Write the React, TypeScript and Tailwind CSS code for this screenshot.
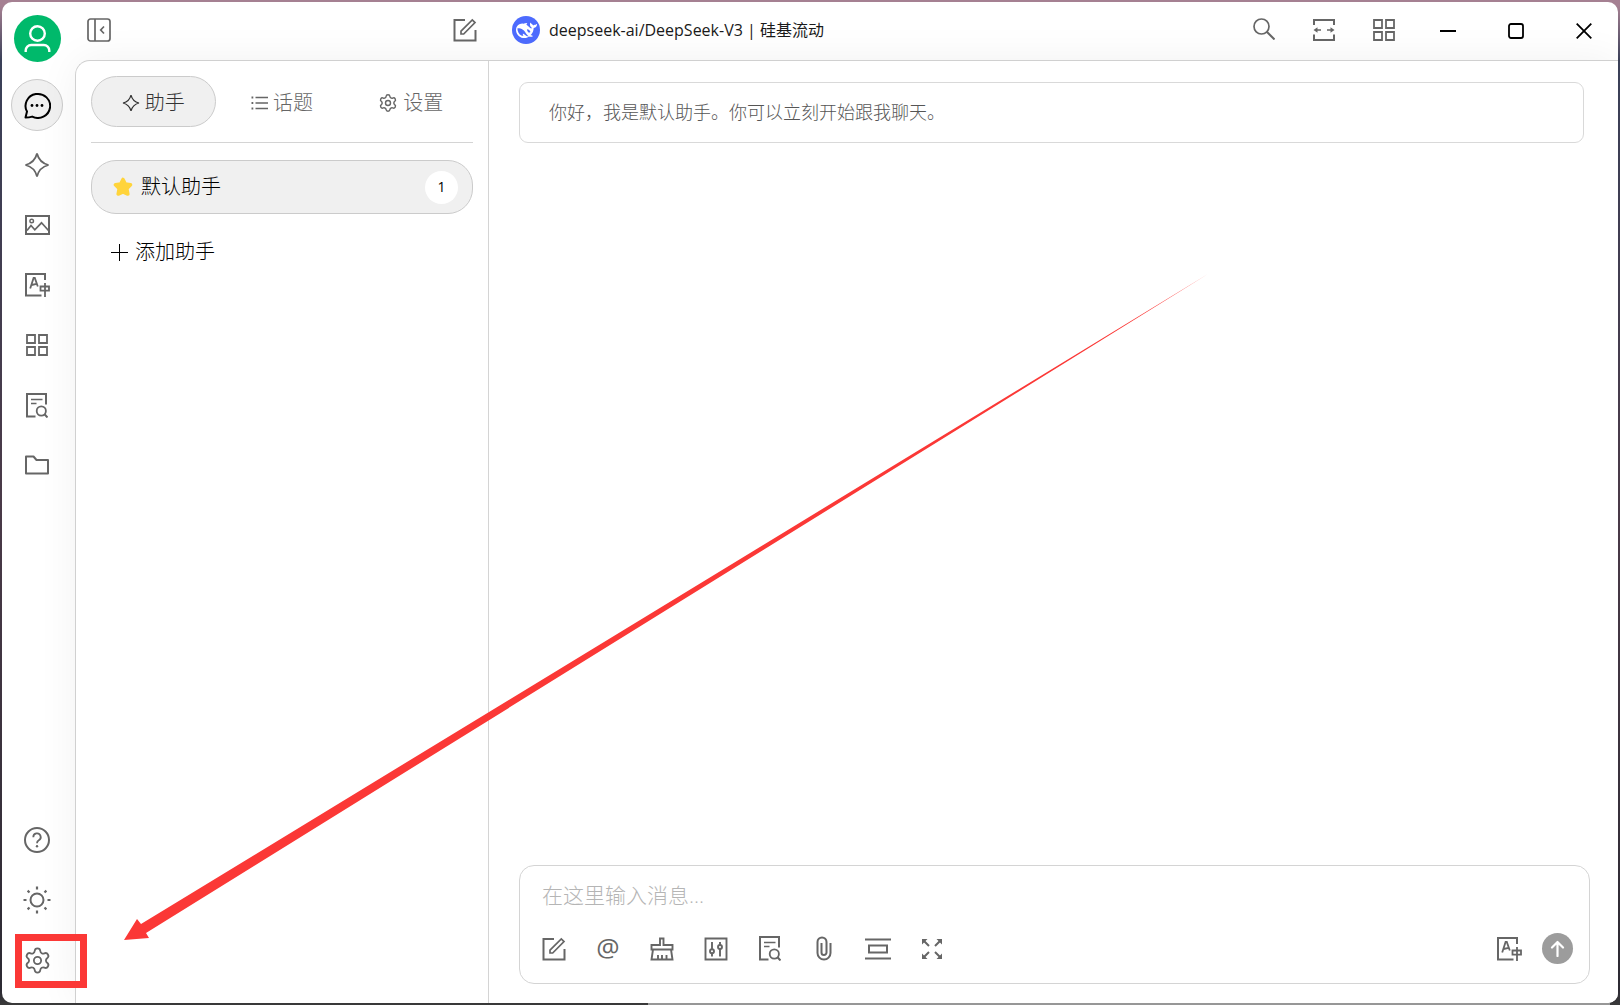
import { ReactNode, useState } from "react";
import { Settings } from "lucide-react";

interface GlyphProps {
  w: number;
  h: number;
  children: ReactNode;
  stroke?: number;
}

function Glyph({ w, h, children, stroke = 2 }: GlyphProps) {
  return (
    <svg
      width={w}
      height={h}
      viewBox={`0 0 ${w} ${h}`}
      fill="none"
      stroke="currentColor"
      strokeWidth={stroke}
      className="shrink-0"
      aria-hidden="true"
    >
      {children}
    </svg>
  );
}

const SparkleIcon = ({ size = 26 }: { size?: number }) => (
  <svg width={size} height={size} viewBox="0 0 26 26" fill="none" stroke="currentColor" strokeWidth="1.8" className="shrink-0" aria-hidden="true">
    <path d="M13 1.500C14.500 7.500 18.500 11.500 24.500 13 18.500 14.500 14.500 18.500 13 24.500 11.500 18.500 7.500 14.500 1.500 13 7.500 11.500 11.500 7.500 13 1.500Z" />
  </svg>
);

const ChatIcon = () => (
  <Glyph w={28} h={27}>
    <path d="M2.500 25.600 4 19.600A12.300 12 0 1 1 9.200 24.600Q6 25.600 2.500 25.600Z" strokeLinejoin="round" />
    <g fill="currentColor" stroke="none">
      <circle cx="9" cy="13.500" r="1.400" />
      <circle cx="14" cy="13.500" r="1.400" />
      <circle cx="19" cy="13.500" r="1.400" />
    </g>
  </Glyph>
);

const ImageIcon = () => (
  <Glyph w={25} h={20}>
    <path d="M1 1H24V19H1Z" />
    <circle cx="6.700" cy="6" r="1.800" strokeWidth="1.400" />
    <path d="M2 15.500 6 10.500 9.800 14.800 16.500 7.800 23.500 15.500" strokeWidth="1.700" />
  </Glyph>
);

const TranslateIcon = () => (
  <Glyph w={25} h={24}>
    <path d="M20 7V1H1V22.500H16.500" />
    <path d="M5.200 15.500 8.600 5H9.800L12.800 13.500M6.500 12 11.800 10.800" strokeWidth="1.800" />
    <path d="M15.500 13.500H24V17.700H15.500ZM20 10V24" strokeWidth="1.800" />
  </Glyph>
);

const GridIcon = () => (
  <Glyph w={24} h={24} stroke={1.800}>
    <path d="M2 2H10V10H2ZM14 2H22V10H14ZM2 14H10V22H2ZM14 14H22V22H14Z" />
  </Glyph>
);

const DocSearchIcon = () => (
  <Glyph w={22} h={25}>
    <path d="M20 11.500V1H1V23.500H9.500" />
    <path d="M5 6.500H16.500M5 10.500H10.500" strokeWidth="1.500" />
    <circle cx="15.300" cy="18" r="4.600" strokeWidth="1.800" />
    <path d="M18.500 21.300 21.500 24.500" />
  </Glyph>
);

const FolderIcon = () => (
  <Glyph w={24} h={20}>
    <path d="M1 1.500H8.500L11.500 5H23V18.500H1Z" strokeLinejoin="round" />
  </Glyph>
);

const HelpIcon = () => (
  <Glyph w={26} h={26}>
    <circle cx="13" cy="13" r="12" />
    <path d="M9.300 10.200A3.700 3.700 0 1 1 14.800 13.300Q13 14.300 13 16.300" strokeWidth="1.800" />
    <circle cx="13" cy="19.300" r="1.200" fill="currentColor" stroke="none" />
  </Glyph>
);

const SunIcon = () => (
  <Glyph w={28} h={28}>
    <circle cx="14" cy="14" r="6.500" />
    <path d="M14 .5V3.500M14 24.500V27.500M.5 14H3.500M24.500 14H27.500M4.600 4.600 6.500 6.500M21.500 21.500 23.400 23.400M4.600 23.400 6.500 21.500M21.500 6.500 23.400 4.600" strokeWidth="2.200" />
  </Glyph>
);

const EditIcon = () => (
  <Glyph w={24} h={24}>
    <path d="M12 2H1.500V22.500H22.500V12" />
    <path d="M8 16V13.200L19.300 2 22 4.600 10.700 16Z" strokeWidth="1.700" />
  </Glyph>
);

const CollapseIcon = () => (
  <Glyph w={24} h={24} stroke={1.700}>
    <rect x="1" y="1" width="22" height="22" rx="2.500" />
    <path d="M8 1V23M17 8.500 13.700 12 17 15.500" />
  </Glyph>
);

const BroomIcon = () => (
  <Glyph w={24} h={24} stroke={1.900}>
    <path d="M10 8V1.500H13.500V8H22.500V12.500H1.500V8ZM3 12.500 1.500 22.500H22.500L21 12.500M8 22.500V18M12 22.500V18M16.500 22.500V18" />
  </Glyph>
);

const SlidersIcon = () => (
  <Glyph w={24} h={24} stroke={1.900}>
    <path d="M1.500 1.500H22.500V22.500H1.500ZM8 5V12.300M8 16.500V19.500M16 5V8M16 12V19.500" />
    <circle cx="8" cy="14.300" r="2" />
    <circle cx="16" cy="10" r="2" />
  </Glyph>
);

const ClipIcon = () => (
  <Glyph w={16} h={25}>
    <path d="M14.500 7V17A6.500 6.500 0 0 1 1.500 17V6A4.500 4.500 0 0 1 10.500 6V16.500A2.500 2.500 0 0 1 5.500 16.500V7" />
  </Glyph>
);

const ContextIcon = () => (
  <Glyph w={26} h={22}>
    <path d="M0 1.500H26M0 20.500H26M4 7.500H22V14.500H4Z" />
  </Glyph>
);

const ExpandIcon = () => (
  <Glyph w={22} h={22}>
    <path d="M2 2 8 8M20 2 14 8M2 20 8 14M20 20 14 14" />
    <path d="M1 1H6.500L1 6.500ZM21 1H15.500L21 6.500ZM1 21V15.500L6.500 21ZM21 21H15.500L21 15.500Z" fill="currentColor" stroke="none" />
  </Glyph>
);

const SearchIcon = () => (
  <Glyph w={22} h={22} stroke={1.700}>
    <circle cx="8.500" cy="8.500" r="7.500" />
    <path d="M13.800 13.800 21.500 21.500" strokeWidth="2" />
  </Glyph>
);

const WidthIcon = () => (
  <Glyph w={24} h={24}>
    <path d="M2 7V2H22V7M2 16.500V22H22V16.500" />
    <path d="M3.500 12H9M15 12H20.500" strokeWidth="1.700" />
    <path d="M1.500 12 5.500 9.300V14.700ZM22.500 12 18.500 9.300V14.700Z" fill="currentColor" stroke="none" />
  </Glyph>
);

const ListIcon = () => (
  <Glyph w={17} h={16} stroke={1.300}>
    <path d="M4.500 2.500H17M4.500 8H17M4.500 13.500H17" />
    <path d="M.5 2.500H2.300M.5 8H2.300M.5 13.500H2.300" strokeWidth="1.800" />
  </Glyph>
);

const StarIcon = () => (
  <svg width="20" height="20" viewBox="0 0 20 20" fill="#ffd43b" stroke="#ffd43b" strokeWidth="3.600" strokeLinejoin="round" className="shrink-0" aria-hidden="true">
    <path d="M10 2.500 12.300 7 17.500 7.800 13.800 11.600 14.800 17 10 14.800 5.200 17 6.200 11.600 2.500 7.800 7.700 7Z" />
  </svg>
);

function ModelLogo() {
  return (
    <span className="flex size-7 shrink-0 items-center justify-center rounded-full bg-[#4d6bfe] text-white">
      <svg width="21" height="21" viewBox="0 0 24 24" fill="currentColor" aria-hidden="true">
        <path
          fillRule="evenodd"
          d="M23.748 4.482c-.254-.124-.364.113-.512.234-.051.039-.094.09-.137.136-.372.397-.806.657-1.373.626-.829-.046-1.537.214-2.163.848-.133-.782-.575-1.248-1.247-1.548-.352-.156-.708-.311-.955-.65-.172-.241-.219-.51-.305-.774-.055-.16-.11-.323-.293-.35-.2-.031-.278.136-.356.276-.313.572-.434 1.202-.422 1.84.027 1.436.633 2.58 1.838 3.393.137.093.172.187.129.323-.082.28-.18.552-.266.833-.055.179-.137.217-.329.14a5.526 5.526 0 01-1.736-1.18c-.857-.828-1.631-1.742-2.597-2.458a11.365 11.365 0 00-.689-.471c-.985-.957.13-1.743.388-1.836.27-.098.093-.432-.779-.428-.872.004-1.67.295-2.687.684a3.055 3.055 0 01-.465.137 9.597 9.597 0 00-2.883-.102c-1.885.21-3.39 1.102-4.497 2.623C.082 8.606-.231 10.684.152 12.85c.403 2.284 1.569 4.175 3.36 5.653 1.858 1.533 3.997 2.284 6.438 2.14 1.482-.085 3.133-.284 4.994-1.86.47.234.962.327 1.78.397.63.059 1.236-.03 1.705-.128.735-.156.684-.837.419-.961-2.155-1.004-1.682-.595-2.113-.926 1.096-1.296 2.746-2.642 3.392-7.003.05-.347.007-.565 0-.845-.004-.17.035-.237.23-.256a4.173 4.173 0 001.545-.475c1.396-.763 1.96-2.015 2.093-3.517.02-.23-.004-.467-.247-.588zM11.581 18c-2.089-1.642-3.102-2.183-3.52-2.16-.392.024-.321.471-.235.763.09.288.207.486.371.739.114.167.192.416-.113.603-.673.416-1.842-.14-1.897-.167-1.361-.802-2.5-1.86-3.301-3.307-.774-1.393-1.224-2.887-1.298-4.482-.02-.386.093-.522.477-.592a4.696 4.696 0 011.529-.039c2.132.312 3.946 1.265 5.468 2.774.868.86 1.525 1.887 2.202 2.891.72 1.066 1.494 2.082 2.48 2.914.348.292.625.514.891.677-.802.09-2.14.11-3.054-.614zM12.600 11.300c.3-.6.900-.7 1.400-.5 1 .4 1.700 1.200 2.200 2.100.3.600.1 1.100-.5 1.300-.8.300-1.500 0-2-.6-.5-.7-.8-1.500-1.100-2.300z"
        />
      </svg>
    </span>
  );
}

const navItems = [
  { label: "聊天", icon: <ChatIcon />, active: true },
  { label: "智能体", icon: <SparkleIcon /> },
  { label: "绘画", icon: <ImageIcon /> },
  { label: "翻译", icon: <TranslateIcon /> },
  { label: "小程序", icon: <GridIcon /> },
  { label: "知识库", icon: <DocSearchIcon /> },
  { label: "文件", icon: <FolderIcon /> },
];

const tabs = [
  { label: "助手", icon: <SparkleIcon size={18} /> },
  { label: "话题", icon: <ListIcon /> },
  { label: "设置", icon: <Settings size={20} strokeWidth={1.7} /> },
];

const tools = [
  { label: "新话题", icon: <EditIcon /> },
  { label: "提及模型", icon: <span className="pb-1 text-[26px] leading-6 font-normal">@</span> },
  { label: "清空消息", icon: <BroomIcon /> },
  { label: "参数", icon: <SlidersIcon /> },
  { label: "选择知识库", icon: <DocSearchIcon /> },
  { label: "上传附件", icon: <ClipIcon /> },
  { label: "清除上下文", icon: <ContextIcon /> },
  { label: "展开", icon: <ExpandIcon /> },
];

function NavButton({ label, icon, active }: { label: string; icon: ReactNode; active?: boolean }) {
  return (
    <button
      type="button"
      aria-label={label}
      className={`flex size-[52px] items-center justify-center rounded-full ${
        active ? "border border-[#cbcbcb] bg-[#f0f0f0] text-black" : "text-[#666]"
      }`}
    >
      {icon}
    </button>
  );
}

function Sidebar() {
  return (
    <nav className="flex w-[73px] shrink-0 flex-col items-center pt-[13px] pr-[3px] pb-[17px]">
      <button type="button" aria-label="用户" className="mb-[17px] flex size-[47px] items-center justify-center rounded-full bg-[#00b96b] text-white">
        <Glyph w={27} h={29} stroke={2.4}>
          <circle cx="13.500" cy="9.500" r="7.300" />
          <path d="M1.700 28V26.500A5.500 5.500 0 0 1 7.200 21H19.800A5.500 5.500 0 0 1 25.300 26.500V28" />
        </Glyph>
      </button>
      <div className="flex flex-1 flex-col gap-2">
        {navItems.map((item) => (
          <NavButton key={item.label} {...item} />
        ))}
      </div>
      <div className="flex flex-col gap-2">
        <NavButton label="帮助" icon={<HelpIcon />} />
        <NavButton label="主题" icon={<SunIcon />} />
        <div className="relative">
          <NavButton label="设置" icon={<Settings size={29} strokeWidth={1.5} />} />
          <div className="pointer-events-none absolute top-0 left-1 z-20 h-[54px] w-[72px] border-[7px] border-[#fb3836]" />
        </div>
      </div>
    </nav>
  );
}

function Header() {
  return (
    <header className="flex h-[58px] shrink-0 items-center text-[#666]">
      <div className="flex w-[414px] shrink-0 items-center justify-between pr-3 pb-[2px] pl-3">
        <button type="button" aria-label="收起侧栏">
          <CollapseIcon />
        </button>
        <button type="button" aria-label="新建话题">
          <EditIcon />
        </button>
      </div>
      <button type="button" className="ml-[23px] flex items-center gap-[9px] pb-[2px] text-base font-normal text-[#1a1a1a]">
        <ModelLogo />
        <span>deepseek-ai/DeepSeek-V3 | 硅基流动</span>
      </button>
      <div className="ml-auto flex pb-[2px]">
        <button type="button" aria-label="搜索" className="flex w-[60px] justify-center">
          <SearchIcon />
        </button>
        <button type="button" aria-label="宽度" className="flex w-[60px] justify-center">
          <WidthIcon />
        </button>
        <button type="button" aria-label="小程序" className="flex w-[60px] justify-center">
          <GridIcon />
        </button>
      </div>
      <div className="flex text-black">
        <button type="button" aria-label="最小化" className="flex w-[68px] justify-center">
          <Glyph w={16} h={16}>
            <path d="M0 8H16" />
          </Glyph>
        </button>
        <button type="button" aria-label="最大化" className="flex w-[68px] justify-center">
          <Glyph w={16} h={16} stroke={1.800}>
            <rect x="1" y="1" width="14" height="14" rx="2" />
          </Glyph>
        </button>
        <button type="button" aria-label="关闭" className="flex w-[68px] justify-center">
          <Glyph w={16} h={16} stroke={1.800}>
            <path d="M.7.7 15.300 15.300M15.300.7.7 15.300" />
          </Glyph>
        </button>
      </div>
    </header>
  );
}

function AssistantPanel() {
  const [activeTab, setActiveTab] = useState("助手");

  return (
    <aside className="flex w-[413px] shrink-0 flex-col border-r border-[#d4d4d4] px-[15px] pt-[15px]">
      <div className="flex gap-1 border-b border-[#d4d4d4] pb-[15px]">
        {tabs.map((tab) => (
          <button
            key={tab.label}
            type="button"
            onClick={() => setActiveTab(tab.label)}
            className={`flex h-[51px] flex-1 items-center justify-center gap-[5px] rounded-full border pt-[3px] text-[20px] ${
              activeTab === tab.label
                ? "border-[#cbcbcb] bg-[#f0f0f0] text-[#333]"
                : "border-transparent text-[#666]"
            }`}
          >
            {tab.icon}
            {tab.label}
          </button>
        ))}
      </div>
      <button type="button" className="mt-[17px] flex h-[54px] items-center gap-2 rounded-[25px] border border-[#cbcbcb] bg-[#f0f0f0] pr-[14px] pl-[21px] text-[20px] text-black">
        <StarIcon />
        默认助手
        <span className="ml-auto flex size-[33px] items-center justify-center rounded-full bg-white text-sm font-normal">1</span>
      </button>
      <button type="button" className="mt-3 flex h-[52px] items-center gap-[7px] pl-5 text-[20px] text-black">
        <Glyph w={17} h={17} stroke={1}>
          <path d="M0 8.500H17M8.500 0V17" />
        </Glyph>
        添加助手
      </button>
    </aside>
  );
}

function ChatPanel() {
  return (
    <main className="flex min-w-0 flex-1 flex-col pb-[19px] pl-[30px]">
      <div className="mt-[21px] mr-[34px] flex h-[61px] items-center rounded-[9px] border border-[#d9d9d9] px-[29px] text-[18px] text-[#555]">
        <p>你好，我是默认助手。你可以立刻开始跟我聊天。</p>
      </div>
      <form
        onSubmit={(event) => event.preventDefault()}
        className="mt-auto mr-7 rounded-[15px] border border-[#d4d4d4] px-[22px] pt-[13px] pb-[19px]"
      >
        <textarea
          aria-label="消息"
          rows={1}
          placeholder="在这里输入消息..."
          className="block h-8 w-full resize-none overflow-hidden text-[21px] leading-8 text-[#333] outline-none placeholder:text-[#b5b5b5]"
        />
        <div className="mt-[22px] flex h-[31px] items-center text-[#666]">
          <div className="-ml-[15px] flex">
            {tools.map((tool) => (
              <button key={tool.label} type="button" aria-label={tool.label} className="flex w-[54px] items-center justify-center">
                {tool.icon}
              </button>
            ))}
          </div>
          <div className="-mr-[6px] ml-auto flex items-center gap-5">
            <button type="button" aria-label="翻译">
              <TranslateIcon />
            </button>
            <button type="submit" aria-label="发送" className="flex size-[31px] items-center justify-center rounded-full bg-[#9c9c9c] text-white">
              <Glyph w={15} h={17} stroke={2.2}>
                <path d="M7.500 16V2M2 7.500 7.500 2 13 7.500" strokeLinecap="round" strokeLinejoin="round" />
              </Glyph>
            </button>
          </div>
        </div>
      </form>
    </main>
  );
}

export default function App() {
  return (
    <div className="relative h-screen bg-[linear-gradient(to_bottom,#a58092_0,#a58092_6px,#3a4058_60px,#4a3a48_500px,#2c2a33_990px,#3a3a3a_100%)] p-[2px] font-['Open_Sans','Noto_Sans_CJK_SC',sans-serif] font-light">
      <div className="flex h-full overflow-hidden rounded-[10px] bg-white">
        <Sidebar />
        <div className="flex min-w-0 flex-1 flex-col">
          <Header />
          <div className="flex min-h-0 flex-1 rounded-tl-[15px] border-t border-l border-[#d0d0d0] bg-white shadow-[0_0_40px_rgba(0,0,0,0.06)]">
            <AssistantPanel />
            <ChatPanel />
          </div>
        </div>
      </div>
      {/* bottom edge turns light grey to the right of the dark part */}
      <div className="absolute right-[10px] bottom-0 left-[40%] h-[2px] bg-[#979797]" />
      {/* arrow pointing at the settings button */}
      <svg
        className="pointer-events-none absolute inset-0 z-20 h-full w-full"
        viewBox="0 0 1620 1005"
        preserveAspectRatio="none"
        fill="#fb3836"
        aria-hidden="true"
      >
        <path d="M124 940 137 919 141 924 1208 274 146 933 149 938Z" />
      </svg>
    </div>
  );
}
